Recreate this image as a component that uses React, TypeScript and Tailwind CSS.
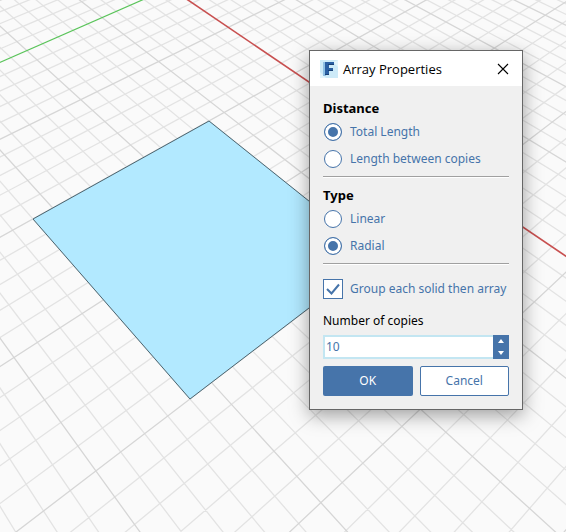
import { useState } from "react";

type Vec3 = [number, number, number];

/* Ground plane camera: maps plane units (a, b) to homogeneous screen points. */
function project(a: number, b: number): Vec3 {
  const s = (a - 2) / 2;
  const t = (3.2 - b) / 2;
  return [
    121.85 * s + 205 * t + 33,
    106.18 * s - 81.21 * t + 219,
    -0.18502 * s + 0.13876 * t + 1,
  ];
}

function screen(a: number, b: number): string {
  const [x, y, w] = project(a, b);
  return `${(x / w).toFixed(1)},${(y / w).toFixed(1)}`;
}

/* The line through two plane points, cut at the left and right of the view. */
function linePath(p: Vec3, q: Vec3): string {
  const l = p[1] * q[2] - p[2] * q[1];
  const m = p[2] * q[0] - p[0] * q[2];
  const n = p[0] * q[1] - p[1] * q[0];
  const y = (x: number) => (-(l * x + n) / m).toFixed(1);
  return `M-10 ${y(-10)}L1400 ${y(1400)}`;
}

const alongGreen = (a: number) => linePath(project(a, 0), project(a, 3));
const alongRed = (b: number) => linePath(project(0, b), project(3, b));

const minor: string[] = [];
const major: string[] = [];
for (let i = -8; i <= 34; i++) {
  if (i !== 0) (i % 5 === 0 ? major : minor).push(alongGreen(i / 5));
}
for (let i = -22; i <= 28; i++) {
  if (i !== 0) (i % 5 === 0 ? major : minor).push(alongRed(i / 5));
}

function Viewport() {
  return (
    <svg
      className="block h-full w-full"
      viewBox="0 0 566 532"
      preserveAspectRatio="xMinYMin slice"
      fill="none"
      aria-hidden="true"
    >
      <path d={minor.join("")} stroke="#e3e3e3" strokeWidth="1.3" />
      <path d={major.join("")} stroke="#d6d6d6" strokeWidth="1.3" />
      <path d={alongGreen(0)} stroke="#5ac45a" strokeWidth="1.2" />
      <path d={alongRed(0)} stroke="#c85050" strokeWidth="1.6" />
      <polygon
        points={[screen(2, 3.2), screen(2, 1.2), screen(4, 1.2), screen(4, 3.2)].join(" ")}
        fill="#b2e9ff"
        stroke="#4c6570"
        strokeWidth="1"
      />
    </svg>
  );
}

function AppIcon() {
  return (
    <svg className="h-[18px] w-[18px]" viewBox="0 0 18 18" aria-hidden="true">
      <rect width="18" height="18" fill="#cdeaf8" />
      <path d="M0 12L6 18H0zM18 0v7L13 2z" fill="#e4f5fc" />
      <path d="M3 2h3v14H3z" fill="#8fc0e4" />
      <path d="M5 2h9v3H9v3h4v3H9v4H5z" fill="#2a5fa3" />
      <path d="M8 5h6V4H8zM8 11h5v-1H8zM5 15h4v-1H5z" fill="#1a4177" />
    </svg>
  );
}

type RadioProps = {
  name: string;
  label: string;
  checked: boolean;
  onSelect: () => void;
};

function Radio({ name, label, checked, onSelect }: RadioProps) {
  return (
    <label className="flex h-[27px] items-center gap-2 pl-px text-[#4674aa]">
      <input
        type="radio"
        name={name}
        checked={checked}
        onChange={onSelect}
        className="h-[18px] w-[18px] shrink-0 appearance-none rounded-full border border-[#4674aa] bg-white checked:bg-[#4674aa] checked:shadow-[inset_0_0_0_3px_white]"
      />
      {label}
    </label>
  );
}

type GroupProps = {
  title: string;
  options: string[];
  initial: string;
};

function RadioGroup({ title, options, initial }: GroupProps) {
  const [value, setValue] = useState(initial);
  return (
    <fieldset className="border-b border-[#a0a0a0] pb-1 shadow-[0_1px_0_white]">
      <legend className="h-5 text-[13px] font-bold text-black">{title}</legend>
      {options.map((option) => (
        <Radio
          key={option}
          name={title}
          label={option}
          checked={value === option}
          onSelect={() => setValue(option)}
        />
      ))}
    </fieldset>
  );
}

function ArrayDialog() {
  const [grouped, setGrouped] = useState(true);
  const [copies, setCopies] = useState(10);
  return (
    <section
      role="dialog"
      aria-labelledby="dialog-title"
      className="absolute top-[50px] left-[309px] w-[214px] border border-[#666666] bg-[#f0f0f0] text-[12px] leading-5 shadow-[0_5px_18px_rgba(0,0,0,0.38)]"
    >
      <header className="flex h-[35px] items-center bg-white pr-[13px] pl-[10px]">
        <AppIcon />
        <h1 id="dialog-title" className="ml-[5px] flex-1 font-['Open_Sans',sans-serif] text-[13px] text-black">
          Array Properties
        </h1>
        <button type="button" aria-label="Close">
          <svg className="h-3 w-3" viewBox="0 0 12 12" fill="none" stroke="#000" strokeWidth="1.1">
            <path d="M1 1l10 10M11 1L1 11" />
          </svg>
        </button>
      </header>
      <form className="px-[13px] pt-3 pb-[13px]" onSubmit={(e) => e.preventDefault()}>
        <div className="flex flex-col gap-2">
          <RadioGroup
            title="Distance"
            options={["Total Length", "Length between copies"]}
            initial="Total Length"
          />
          <RadioGroup title="Type" options={["Linear", "Radial"]} initial="Radial" />
        </div>
        <label className="mt-[15px] flex items-center gap-[7px] whitespace-nowrap text-[#4674aa]">
          <span className="grid h-5 w-5 shrink-0">
            <input
              type="checkbox"
              checked={grouped}
              onChange={(e) => setGrouped(e.target.checked)}
              className="peer h-5 w-5 appearance-none border border-[#4674aa] bg-white [grid-area:1/1]"
            />
            <svg
              className="pointer-events-none invisible h-5 w-5 [grid-area:1/1] peer-checked:visible"
              viewBox="0 0 20 20"
              fill="none"
              stroke="#4674aa"
              strokeWidth="2"
            >
              <path d="M4 10l4.5 4.5L16 5.5" />
            </svg>
          </span>
          Group each solid then array
        </label>
        <label htmlFor="copies" className="mt-3 block text-black">
          Number of copies
        </label>
        <div className="mt-1 flex h-6">
          <input
            id="copies"
            type="text"
            inputMode="numeric"
            value={copies}
            onChange={(e) => setCopies(Number(e.target.value) || 0)}
            className="min-w-0 flex-1 border-2 border-r-0 border-[#c3e6f2] bg-white pl-px text-[#4674aa] outline-none"
          />
          <div className="flex w-4 flex-col bg-[#4674aa]">
            <button
              type="button"
              aria-label="More copies"
              className="flex flex-1 items-center justify-center"
              onClick={() => setCopies(copies + 1)}
            >
              <svg className="h-1 w-[6px]" viewBox="0 0 6 4" fill="#fff">
                <path d="M3 0l3 4H0z" />
              </svg>
            </button>
            <button
              type="button"
              aria-label="Fewer copies"
              className="flex flex-1 items-center justify-center"
              onClick={() => setCopies(Math.max(1, copies - 1))}
            >
              <svg className="h-1 w-[6px]" viewBox="0 0 6 4" fill="#fff">
                <path d="M3 4l3-4H0z" />
              </svg>
            </button>
          </div>
        </div>
        <div className="mt-[7px] grid grid-cols-2 gap-[7px]">
          <button type="submit" className="h-[30px] rounded-[2px] bg-[#4674aa] text-white">
            OK
          </button>
          <button
            type="button"
            className="h-[30px] rounded-[2px] border border-[#4674aa] bg-white text-[#4674aa]"
          >
            Cancel
          </button>
        </div>
      </form>
    </section>
  );
}

export default function App() {
  return (
    <main className="relative h-screen overflow-hidden bg-[#fafafa] font-['Noto_Sans',sans-serif]">
      <Viewport />
      <ArrayDialog />
    </main>
  );
}
